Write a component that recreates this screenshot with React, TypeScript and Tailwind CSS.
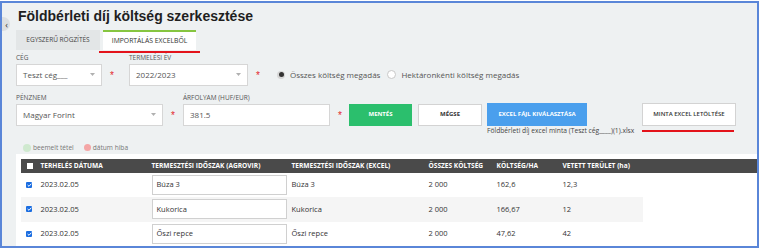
const Asterisk = ({ w }: { w: string }) => (
  <div className={`${w} h-[22px] flex items-center pl-[8px] text-[10px] leading-none text-[#e3262c] font-['Liberation_Sans',Arial,sans-serif]`}>
    <span className="mt-[3px]">*</span>
  </div>
);

const Caret = () => (
  <svg width="5" height="3" viewBox="0 0 5 3" className="shrink-0">
    <path d="M0 0 L5 0 L2.5 3 Z" fill="#b0b0b0" />
  </svg>
);

const Field = ({
  label,
  width,
  value,
  select = true,
}: {
  label: string;
  width: string;
  value: string;
  select?: boolean;
}) => (
  <div className={`${width} flex flex-col`}>
    <div className="text-[6.5px] leading-[6px] uppercase text-[#555] mb-[3px] whitespace-nowrap">{label}</div>
    <div className="h-[22px] bg-white border border-[#d6d6d6] flex items-center justify-between pl-[6px] pr-[6px] text-[8px] text-[#555]">
      <span>{value}</span>
      {select && <Caret />}
    </div>
  </div>
);

const Check = () => (
  <div className="w-[6px] h-[6px] rounded-[1px] bg-[#1b6de0] flex items-center justify-center">
    <svg width="5" height="4" viewBox="0 0 5 4">
      <path d="M0.6 2 L2 3.3 L4.4 0.7" stroke="white" strokeWidth="1" fill="none" />
    </svg>
  </div>
);

const cols = "grid grid-cols-[19.5px_111px_140px_137px_68px_66px_81px] w-[622px]";

const ROWS = [
  { date: "2023.02.05", agro: "Búza 3", excel: "Búza 3", total: "2 000", perHa: "162,6", area: "12,3" },
  { date: "2023.02.05", agro: "Kukorica", excel: "Kukorica", total: "2 000", perHa: "166,67", area: "12" },
  { date: "2023.02.05", agro: "Őszi repce", excel: "Őszi repce", total: "2 000", perHa: "47,62", area: "42" },
];

export default function App() {
  return (
    <div className="w-[760px] h-[249px] bg-white pt-px pr-px pb-px overflow-hidden font-['Open_Sans',sans-serif]">
      <div className="relative w-[759px] h-[247px] border-2 border-[#5a86d8] bg-[#eef1f2] overflow-hidden pl-[14px] pt-[5px] flex flex-col">
        {/* collapse */}
        <div className="absolute left-[-6px] top-[14px] w-[14px] h-[14px] rounded-full bg-[#dcdfe1] flex items-center justify-end pr-[2px] text-[9px] leading-none text-[#333]">
          ‹
        </div>

        <h1 className="pl-[2px] font-['Liberation_Sans',Arial,sans-serif] font-bold text-[14px] leading-[16px] text-[#1f1f1f]">
          Földbérleti díj költség szerkesztése
        </h1>

        {/* Tabs */}
        <div className="relative mt-[6px] flex h-[21px]">
          <div className="w-[84px] bg-[#e3e6e7] flex items-center justify-center text-[6.5px] text-[#444]">
            EGYSZERŰ RÖGZÍTÉS
          </div>
          <div className="ml-[3px] w-[93px] bg-white border-t-2 border-[#86c540] flex items-center justify-center text-[6.8px] text-[#333]">
            IMPORTÁLÁS EXCELBŐL
          </div>
          <div className="absolute left-[83px] top-[21px] w-[101px] h-[2px] bg-[#e3131b]" />
        </div>

        {/* Row 1 */}
        <div className="mt-[5px] flex items-end">
          <Field label="Cég" width="w-[86px]" value="Teszt cég___" />
          <Asterisk w="w-[27px]" />
          <Field label="Termelési év" width="w-[119px]" value="2022/2023" />
          <Asterisk w="w-[29px]" />
          <div className="h-[22px] flex items-center text-[8px] text-[#555]">
            <div className="w-[8px] h-[8px] rounded-full bg-[#d6d6d6] flex items-center justify-center">
              <div className="w-[5px] h-[5px] rounded-full bg-[#333]" />
            </div>
            <span className="ml-[5px]">Összes költség megadás</span>
            <div className="ml-[7px] w-[9px] h-[9px] rounded-full border border-[#c8c8c8] bg-white" />
            <span className="ml-[5px]">Hektáronkénti költség megadás</span>
          </div>
        </div>

        {/* Row 2 */}
        <div className="mt-[9px] flex items-end">
          <Field label="Pénznem" width="w-[147px]" value="Magyar Forint" />
          <Asterisk w="w-[20px]" />
          <Field label="Árfolyam (HUF/EUR)" width="w-[147px]" value="381.5" select={false} />
          <Asterisk w="w-[19px]" />
          <button className="w-[63px] h-[22px] bg-[#2bbf6d] text-white text-[6px] font-bold">MENTÉS</button>
          <button className="ml-[6px] w-[64px] h-[22px] bg-white border border-[#d3d3d3] text-[#333] text-[6px] font-bold">
            MÉGSE
          </button>
          <div className="relative ml-[5px]">
            <button className="w-[100px] h-[23px] bg-[#4a9fed] text-white text-[6px] font-bold">
              EXCEL FÁJL KIVÁLASZTÁSA
            </button>
            <div className="absolute left-0 top-full mt-[2px] whitespace-nowrap text-[6.7px] leading-[6px] text-[#444]">
              Földbérleti díj excel minta (Teszt cég____)(1).xlsx
            </div>
          </div>
          <div className="relative ml-[55px]">
            <button className="w-[94px] h-[23px] bg-white border border-[#d3d3d3] text-[#333] text-[6px] font-semibold">
              MINTA EXCEL LETÖLTÉSE
            </button>
            <div className="absolute left-0 top-full mt-[4px] w-[92px] h-[2px] bg-[#e3131b]" />
          </div>
        </div>

        {/* Legend */}
        <div className="mt-[18px] pl-[7px] flex items-center text-[6.6px] leading-[6px] text-[#777]">
          <div className="w-[8px] h-[8px] rounded-full bg-[#cfe9cf]" />
          <span className="ml-[2px]">beemelt tétel</span>
          <div className="ml-[10px] w-[7px] h-[7px] rounded-full bg-[#f4a6a6]" />
          <span className="ml-[2px]">dátum hiba</span>
        </div>

        {/* Table */}
        <div className="mt-[2px] flex-1 bg-white pt-[5px] pl-[5px]">
          <div className="h-[14px] bg-[#4a4a4a]">
            <div className={`${cols} h-full items-center text-white text-[6.6px] font-bold whitespace-nowrap`}>
              <div className="pl-[5.5px]">
                <div className="w-[6px] h-[6px] bg-white" />
              </div>
              <div>TERHELÉS DÁTUMA</div>
              <div>TERMESZTÉSI IDŐSZAK (AGROVIR)</div>
              <div>TERMESZTÉSI IDŐSZAK (EXCEL)</div>
              <div>ÖSSZES KÖLTSÉG</div>
              <div>KÖLTSÉG/HA</div>
              <div>VETETT TERÜLET (ha)</div>
            </div>
          </div>
          {ROWS.map((r, i) => (
            <div
              key={i}
              className={`${cols} h-[24.5px] items-center text-[7.5px] text-[#333] ${i % 2 === 1 ? "bg-[#f5f5f5]" : "bg-white"}`}
            >
              <div className="pl-[5px]">
                <Check />
              </div>
              <div>{r.date}</div>
              <div>
                <div className="w-[135px] h-[20px] bg-white border border-[#d0d0d0] flex items-center pl-[4px]">{r.agro}</div>
              </div>
              <div>{r.excel}</div>
              <div>{r.total}</div>
              <div>{r.perHa}</div>
              <div>{r.area}</div>
            </div>
          ))}
        </div>
      </div>
    </div>
  );
}
